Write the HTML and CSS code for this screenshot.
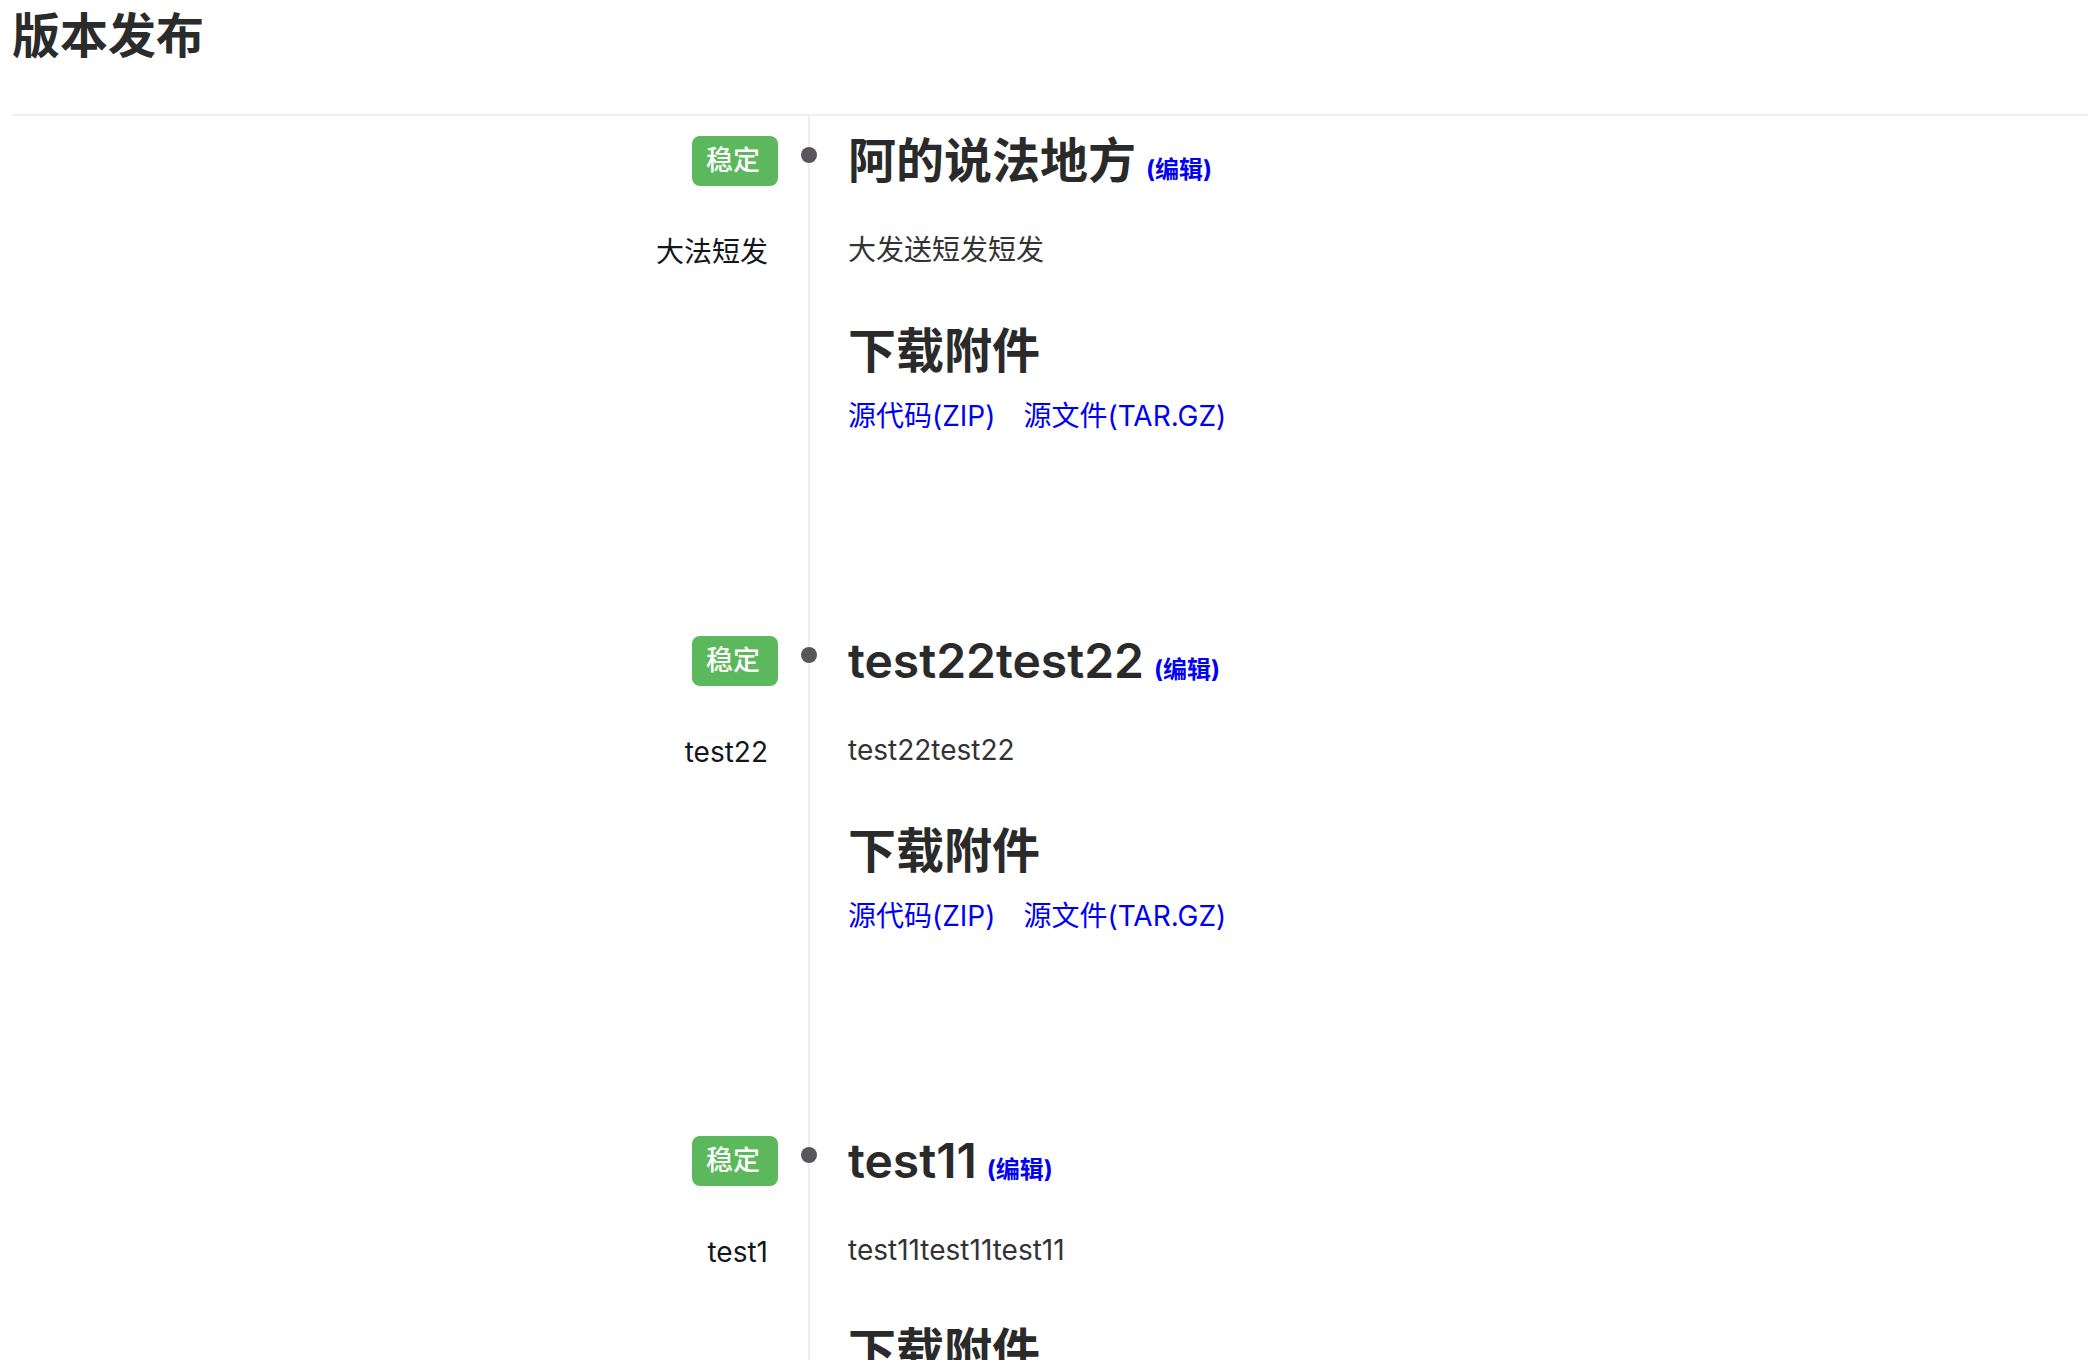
FILE: index.html
```html
<!DOCTYPE html>
<html lang="zh-CN">
  <head>
    <meta charset="UTF-8" />
    <meta name="viewport" content="width=device-width, initial-scale=1" />
    <title>版本发布</title>
    <link rel="stylesheet" href="styles.css">
  </head>

  <body>
    <div class="page">
      <h1 class="page-title">版本发布</h1>

      <div class="timeline">
        <div class="release">
          <div class="release-meta">
            <span class="label">稳定</span>
            <p class="release-tag">大法短发</p>
          </div>
          <div class="release-body">
            <span class="dot"></span>
            <h2 class="release-title">阿的说法地方<a href="#" class="edit">(编辑)</a></h2>
            <p class="release-desc">大发送短发短发</p>
            <h2 class="files-title">下载附件</h2>
            <div class="files">
              <a href="#">源代码(ZIP)</a>
              <a href="#">源文件(TAR.GZ)</a>
            </div>
          </div>
        </div>

        <div class="release">
          <div class="release-meta">
            <span class="label">稳定</span>
            <p class="release-tag">test22</p>
          </div>
          <div class="release-body">
            <span class="dot"></span>
            <h2 class="release-title">test22test22<a href="#" class="edit">(编辑)</a></h2>
            <p class="release-desc">test22test22</p>
            <h2 class="files-title">下载附件</h2>
            <div class="files">
              <a href="#">源代码(ZIP)</a>
              <a href="#">源文件(TAR.GZ)</a>
            </div>
          </div>
        </div>

        <div class="release">
          <div class="release-meta">
            <span class="label">稳定</span>
            <p class="release-tag">test1</p>
          </div>
          <div class="release-body">
            <span class="dot"></span>
            <h2 class="release-title">test11<a href="#" class="edit">(编辑)</a></h2>
            <p class="release-desc">test11test11test11</p>
            <h2 class="files-title">下载附件</h2>
            <div class="files">
              <a href="#">源代码(ZIP)</a>
              <a href="#">源文件(TAR.GZ)</a>
            </div>
          </div>
        </div>
      </div>
    </div>
  </body>
</html>
```

FILE: styles.css
```css
body {
  margin: 0;
  font-family: Inter, "Noto Sans CJK SC", sans-serif;
  color: #333;
  background: #fff;
}

a {
  color: #0000f5;
  text-decoration: none;
}

.page {
  padding: 0 0 0 12px;
}

.page-title {
  margin: 0;
  padding-top: 4px;
  font-size: 48px;
  line-height: 64px;
  font-weight: 700;
  color: #2b2b2b;
  border-bottom: 2px solid #eee;
  padding-bottom: 46px;
}

.release {
  display: flex;
}

.release-meta {
  width: 766px;
  flex-shrink: 0;
  display: flex;
  flex-direction: column;
  align-items: flex-end;
  padding-top: 20px;
}

.label {
  display: inline-block;
  background: #5cb85c;
  color: #fff;
  font-size: 27px;
  font-weight: 500;
  line-height: 50px;
  height: 50px;
  padding: 0 18px 0 14px;
  border-radius: 8px;
}

.release-tag {
  margin: 46px 10px 0 0;
  font-size: 28px;
  line-height: 40px;
  color: #14161e;
}

.release-body {
  position: relative;
  margin-left: 30px;
  border-left: 2px solid #eee;
  padding: 20px 0 0 38px;
  height: 480px;
  flex: 1;
}

.dot {
  position: absolute;
  left: -9px;
  top: 31px;
  width: 16px;
  height: 16px;
  border-radius: 50%;
  background: #58565a;
}

.release-title {
  margin: 0;
  font-size: 48px;
  line-height: 50px;
  font-weight: 600;
  color: #2a2a2a;
}

.edit {
  margin-left: 10px;
  font-size: 24px;
  font-weight: 700;
}

.release-desc {
  margin: 35px 0 0;
  font-size: 28px;
  line-height: 40px;
}

.files-title {
  margin: 51px 0 0;
  font-size: 48px;
  line-height: 60px;
  font-weight: 700;
  color: #2a2a2a;
}

.files {
  display: flex;
  gap: 28px;
  margin-top: 15px;
  font-size: 28px;
  line-height: 40px;
}
```
